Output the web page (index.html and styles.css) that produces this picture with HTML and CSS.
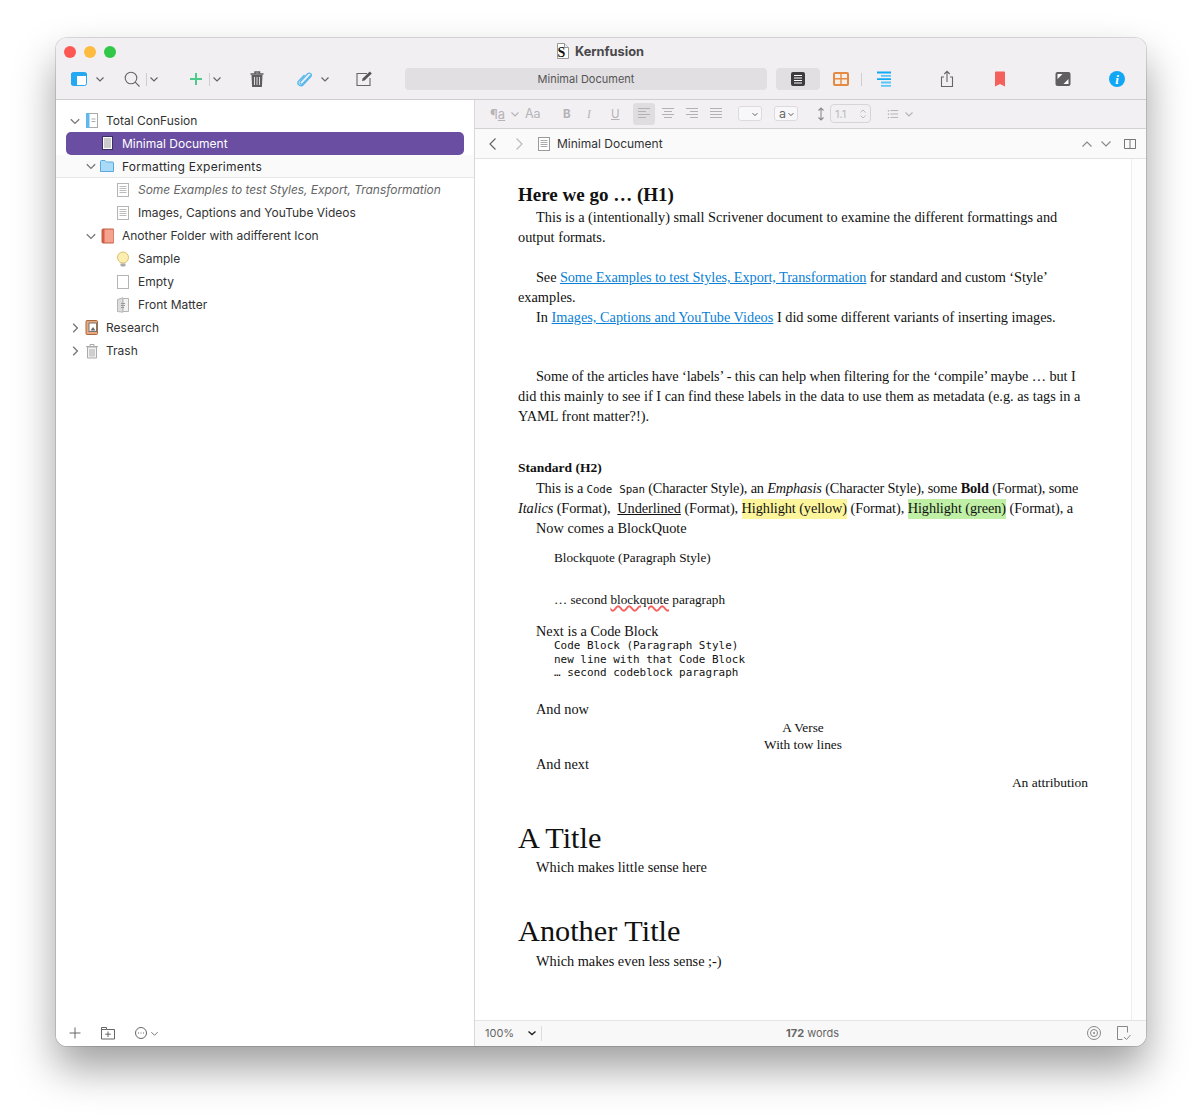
FILE: index.html
```html
<!DOCTYPE html>
<html lang="en">
<head>
<meta charset="utf-8">
<title>Kernfusion</title>
<link rel="stylesheet" href="styles.css">
</head>
<body>
<div class="window">
  <header class="chrome">
    <div class="titlebar">
      <div class="lights"><i class="light red"></i><i class="light yellow"></i><i class="light green"></i></div>
      <div class="title">
        <svg class="title-icon" viewBox="0 0 14 16"><path d="M1.500.5h7l4 4v11h-11z" fill="#fff" stroke="#999"/><path d="M8.500.5v4h4" fill="#eee" stroke="#999"/><text x="1.600" y="14" class="title-s">S</text></svg>
        <span>Kernfusion</span>
      </div>
    </div>
    <div class="toolbar">
      <svg class="ti ml-13" viewBox="0 0 20 20"><rect x="2.500" y="3.500" width="15" height="13" rx="2" fill="#fff" stroke="#2ba6ef"/><path d="M2 5.500a2 2 0 0 1 2-2h12a2 2 0 0 1 2 2v1.500H8v9.500H4a2 2 0 0 1-2-2z" fill="#23a8f2"/></svg>
      <svg class="cv ml-6" viewBox="0 0 10 10"><path d="M1.500 3.500 5 7l3.500-3.500"/></svg>
      <svg class="ti ml-17" viewBox="0 0 20 20"><circle cx="9" cy="9" r="5.800" class="ln-gray"/><path d="m13.200 13.200 4.300 4.300" class="ln-gray"/></svg>
      <i class="sep ml-4"></i>
      <svg class="cv ml-2" viewBox="0 0 10 10"><path d="M1.500 3.500 5 7l3.500-3.500"/></svg>
      <svg class="ti ml-27" viewBox="0 0 20 20"><path d="M10 4v12M4 10h12" fill="none" stroke="#4dcb8c" stroke-width="2"/></svg>
      <i class="sep ml-3"></i>
      <svg class="cv ml-2" viewBox="0 0 10 10"><path d="M1.500 3.500 5 7l3.500-3.500"/></svg>
      <svg class="ti ml-25" viewBox="0 0 20 20"><path d="M3.500 5h13M8 5V3h4.500v2" fill="none" stroke="#5f5d5f" stroke-width="1.500"/><path d="M4.500 6h11l-.6 12H5.100z" fill="#5f5d5f"/><path d="M7.500 8v8M10 8v8M12.500 8v8" stroke="#ddd"/></svg>
      <svg class="ti ml-28" viewBox="0 0 20 20"><path d="M15.500 6.500 8 14.500c-1.500 1.600-4 .2-2.600-2l7-7.500c2-2 5-.2 3.600 2.300l-7.500 8.200c-2.500 2.700-7 .5-5.200-3.200L9.500 6" fill="none" stroke="#57b9ee" stroke-width="1.300"/></svg>
      <svg class="cv ml-5" viewBox="0 0 10 10"><path d="M1.500 3.500 5 7l3.500-3.500"/></svg>
      <svg class="ti ml-24" viewBox="0 0 20 20"><path d="M13 4.500H3v12h13V9" class="ln-gray"/><path d="m8 12 .6-2.600L15.800 2.500l2 2-7.200 7z" fill="#555"/></svg>
      <div class="searchbar ml-31">Minimal Document</div>
      <div class="seg ml-9"><svg class="ti" viewBox="0 0 20 20"><rect x="3" y="3" width="14" height="14" rx="2" fill="#3d3b3d"/><path d="M6 6.500h8M6 9h8M6 11.500h8M6 14h8" stroke="#fff"/></svg></div>
      <svg class="ti ml-11" viewBox="0 0 20 20"><rect x="2" y="3" width="16" height="14" rx="2" fill="#e48a45"/><path d="M4 5h5.300v4H4zM10.700 5H16v4h-5.300zM4 10.500h5.300V15H4zM10.700 10.500H16V15h-5.300z" fill="#f6eee8"/></svg>
      <i class="sep ml-10"></i>
      <svg class="ti ml-12" viewBox="0 0 20 20"><path d="M3 3.500h14" stroke="#12aaf5" stroke-width="1.800"/><path d="M7 6.800h10" stroke="#58c6f8" stroke-width="1.800"/><path d="M3 10.200h14" stroke="#12aaf5" stroke-width="1.800"/><path d="M7 13.500h10M7 16.800h10" stroke="#58c6f8" stroke-width="1.800"/></svg>
      <svg class="ti ml-43" viewBox="0 0 20 20"><path d="M7 8H4.500v9.500h11V8H13M10 13V2.500M7.300 5 10 2.300 12.700 5" fill="none" stroke="#666" stroke-width="1.100"/></svg>
      <svg class="ti ml-33" viewBox="0 0 20 20"><path d="M5 3.500a1 1 0 0 1 1-1h8a1 1 0 0 1 1 1V17.500l-5-2.500-5 2.500z" fill="#f4615c"/></svg>
      <svg class="ti ml-43" viewBox="0 0 20 20"><rect x="2.500" y="3" width="15" height="14" rx="2" fill="#605e60"/><path d="M4.500 5h5l-5 5zM15.500 15h-5l5-5z" fill="#fff"/></svg>
      <svg class="ti ml-34" viewBox="0 0 20 20"><circle cx="10" cy="10" r="8" fill="#12a7f4"/><text x="10" y="14.500" class="info-i">i</text></svg>
    </div>
  </header>
  <div class="panes">
    <aside class="sidebar">
      <div class="tree">
        <div class="row l0">
          <svg class="chev" viewBox="0 0 10 10"><path d="M1.500 3.500 5 7l3.500-3.500"/></svg>
          <svg class="ic" viewBox="0 0 14 16"><rect x="2.500" y=".5" width="11" height="14" fill="#fff" stroke="#aaa"/><rect x="2" y="0" width="3.500" height="15" fill="#62b7ee"/><path d="M7.500 6h4M7.500 8.500h4" stroke="#aaa"/></svg>
          <span>Total ConFusion</span>
        </div>
        <div class="row l1 selected">
          <span class="chev"></span>
          <svg class="ic" viewBox="0 0 14 16"><rect x="2.500" y=".5" width="10" height="13" fill="#fff" stroke="#3c2e66"/><path d="M4 3h7M4 5h7M4 7h7M4 9h7M4 11h7" stroke="#999"/></svg>
          <span>Minimal Document</span>
        </div>
        <div class="row l1 band">
          <svg class="chev" viewBox="0 0 10 10"><path d="M1.500 3.500 5 7l3.500-3.500"/></svg>
          <svg class="ic" viewBox="0 0 14 16"><path d="M.5 13.500V3.500a1 1 0 0 1 1-1h3.500l1.500 1.500h6a1 1 0 0 1 1 1v8.500z" fill="#a9dbf8" stroke="#5aa9dc"/></svg>
          <span>Formatting Experiments</span>
        </div>
        <div class="row l2 ital">
          <span class="chev"></span>
          <svg class="ic" viewBox="0 0 14 16"><rect x="1.500" y="1.500" width="11" height="13" fill="#fff" stroke="#b5b5b5"/><path d="M3.500 4.500h7M3.500 6.500h7M3.500 8.500h7M3.500 10.500h7" stroke="#bbb"/></svg>
          <span>Some Examples to test Styles, Export, Transformation</span>
        </div>
        <div class="row l2">
          <span class="chev"></span>
          <svg class="ic" viewBox="0 0 14 16"><rect x="1.500" y="1.500" width="11" height="13" fill="#fff" stroke="#b5b5b5"/><path d="M3.500 4.500h7M3.500 6.500h7M3.500 8.500h7M3.500 10.500h7" stroke="#bbb"/></svg>
          <span>Images, Captions and YouTube Videos</span>
        </div>
        <div class="row l1">
          <svg class="chev" viewBox="0 0 10 10"><path d="M1.500 3.500 5 7l3.500-3.500"/></svg>
          <svg class="ic" viewBox="0 0 14 16"><rect x="2" y="1" width="12" height="14" rx="1" fill="#f5a28f" stroke="#c15d47"/><rect x="2" y="1" width="2.500" height="14" fill="#d05f45"/></svg>
          <span>Another Folder with adifferent Icon</span>
        </div>
        <div class="row l2">
          <span class="chev"></span>
          <svg class="ic" viewBox="0 0 14 16"><circle cx="7" cy="6.500" r="5.500" fill="#fcedb0" stroke="#d9c067"/><path d="M4.500 12.500h5v2l-1 1h-3l-1-1z" fill="#aaa"/></svg>
          <span>Sample</span>
        </div>
        <div class="row l2">
          <span class="chev"></span>
          <svg class="ic" viewBox="0 0 14 16"><rect x="1.500" y="1.500" width="11" height="13" fill="#fff" stroke="#b5b5b5"/></svg>
          <span>Empty</span>
        </div>
        <div class="row l2">
          <span class="chev"></span>
          <svg class="ic" viewBox="0 0 14 16"><path d="M1.500 2.500 7 .8v14.400l-5.500-.7z" fill="#ddd" stroke="#b5b5b5"/><path d="M7 1.500h5.500v13H7z" fill="#f2f2f2" stroke="#b5b5b5"/><path d="M5 6.500h4M5 8.500h4M5 10.500h3" stroke="#999"/></svg>
          <span>Front Matter</span>
        </div>
        <div class="row l0">
          <svg class="chev" viewBox="0 0 10 10"><path d="M3.500 1.500 7 5l-3.500 3.500"/></svg>
          <svg class="ic" viewBox="0 0 14 16"><rect x="2" y=".5" width="11.500" height="14" rx="1" fill="#eba77c" stroke="#a86a42"/><rect x="5" y="3" width="7.500" height="8.500" fill="#fff" stroke="#777"/><path d="m6.500 10.500 2.500-3.500 2.500 3.500z" fill="#666"/></svg>
          <span>Research</span>
        </div>
        <div class="row l0">
          <svg class="chev" viewBox="0 0 10 10"><path d="M3.500 1.500 7 5l-3.500 3.500"/></svg>
          <svg class="ic" viewBox="0 0 14 16"><path d="M2 3.500h12M6 3.500v-2h4v2" fill="none" stroke="#aaa"/><path d="M3.500 4h9v11h-9z" fill="#f2f2f2" stroke="#aaa"/><path d="M6 6v7.500M8 6v7.500M10 6v7.500" stroke="#aaa"/></svg>
          <span>Trash</span>
        </div>
      </div>
      <div class="side-foot">
        <svg class="fi" viewBox="0 0 16 16"><path d="M8 2.500v11M2.500 8h11" class="ln-thin"/></svg>
        <svg class="fi ml-17" viewBox="0 0 16 16"><path d="M1.500 14V2.500h5v2h8V14zM1.500 4.500h5M8 6.500v5.500M5.200 9.200h5.600" class="ln-thin"/></svg>
        <svg class="fi ml-17" viewBox="0 0 16 16"><circle cx="8" cy="8" r="5.500" class="ln-thin"/><path d="M5 8h1M7.500 8h1M10 8h1" stroke="#666"/></svg>
        <svg class="cv-small ml-1" viewBox="0 0 10 10"><path d="M1.500 3.500 5 7l3.500-3.500"/></svg>
      </div>
    </aside>
    <main class="editor">
      <div class="formatbar">
        <span class="fb-para">¶<u>a</u></span>
        <svg class="cv-fb ml-3" viewBox="0 0 10 10"><path d="M1.500 3.500 5 7l3.500-3.500"/></svg>
        <span class="fb-aa ml-5">Aa</span>
        <b class="fb-b">B</b>
        <i class="fb-i">I</i>
        <u class="fb-u">U</u>
        <svg class="al al-active" viewBox="0 0 22 22"><path d="M5 5.500h12M5 8.500h8M5 11.500h12M5 14.500h8"/></svg>
        <svg class="al ml-2" viewBox="0 0 22 22"><path d="M5 5.500h12M7 8.500h8M5 11.500h12M7 14.500h8"/></svg>
        <svg class="al ml-2" viewBox="0 0 22 22"><path d="M5 5.500h12M9 8.500h8M5 11.500h12M9 14.500h8"/></svg>
        <svg class="al ml-2" viewBox="0 0 22 22"><path d="M5 5.500h12M5 8.500h12M5 11.500h12M5 14.500h12"/></svg>
        <span class="fb-sel fb-sel-empty"><svg class="cv-mini" viewBox="0 0 10 10"><path d="M2 4 5 7l3-3"/></svg></span>
        <span class="fb-sel fb-sel-a">a<svg class="cv-mini" viewBox="0 0 10 10"><path d="M2 4 5 7l3-3"/></svg></span>
        <svg class="fb-arrows" viewBox="0 0 10 16"><path d="M5 2v12M2.500 4.500 5 2l2.500 2.500M2.500 11.500 5 14l2.500-2.500" fill="none" stroke="#8a8a8a" stroke-width="1.100"/></svg>
        <span class="fb-step">1.1<svg class="updown" viewBox="0 0 8 12"><path d="M1.500 4.500 4 2l2.500 2.500M1.500 7.500 4 10l2.500-2.500" fill="none" stroke="#bbb"/></svg></span>
        <svg class="fb-list" viewBox="0 0 14 12"><path d="M4 2h9M4 6h9M4 10h9" stroke="#aaa"/><path d="M1 1.500h1.500v1.500H1zM1 5.500h1.500V7H1zM1 9.500h1.500V11H1z" fill="#aaa"/></svg>
        <svg class="cv-fb ml-5" viewBox="0 0 10 10"><path d="M1.500 3.500 5 7l3.500-3.500"/></svg>
      </div>
      <div class="navbar">
        <svg class="nav-arrow" viewBox="0 0 10 14"><path d="M7.500 1.500 2 7l5.500 5.500" fill="none" stroke="#666" stroke-width="1.200"/></svg>
        <svg class="nav-arrow ml-16" viewBox="0 0 10 14"><path d="M2.500 1.500 8 7l-5.500 5.500" fill="none" stroke="#bbb" stroke-width="1.200"/></svg>
        <svg class="nav-doc" viewBox="0 0 14 16"><rect x="1.500" y="1.500" width="11" height="13" fill="#fff" stroke="#999"/><path d="M3.500 4.500h7M3.500 6.500h7M3.500 8.500h7M3.500 10.500h7" stroke="#aaa"/></svg>
        <span class="nav-title">Minimal Document</span>
        <svg class="nav-up" viewBox="0 0 12 8"><path d="M1.500 6.500 6 2l4.500 4.500" fill="none" stroke="#888" stroke-width="1.100"/></svg>
        <svg class="nav-up ml-7" viewBox="0 0 12 8"><path d="M1.500 1.500 6 6l4.500-4.500" fill="none" stroke="#888" stroke-width="1.100"/></svg>
        <svg class="nav-split" viewBox="0 0 12 12"><path d="M.5 1.500h11v9H.5zM6 1.500v9M.5 1.500h11" fill="none" stroke="#777"/></svg>
      </div>
      <div class="docarea">
        <article class="doc">
          <h1 class="h1">Here we go … (H1)</h1>
          <p class="p gap-2"><span class="ind"></span>This is a (intentionally) small Scrivener document to examine the different formattings and<br>output formats.</p>
          <p class="p gap-20"><span class="ind"></span><span class="tight-1">See <a class="lnk">Some Examples to test Styles, Export, Transformation</a> for standard and custom ‘Style’</span><br>examples.<br><span class="ind"></span>In <a class="lnk">Images, Captions and YouTube Videos</a> I did some different variants of inserting images.</p>
          <p class="p gap-39"><span class="ind"></span><span class="tight-1">Some of the articles have ‘labels’ - this can help when filtering for the ‘compile’ maybe … but I</span><br>did this mainly to see if I can find these labels in the data to use them as metadata (e.g. as tags in a<br>YAML front matter?!).</p>
          <h2 class="h2 gap-32">Standard (H2)</h2>
          <p class="p"><span class="ind"></span><span class="tight-2">This is a <code class="cs">Code Span</code> (Character Style), an <em>Emphasis</em> (Character Style), some <b>Bold</b> (Format), some</span><br><span class="tight-1"><em>Italics</em> (Format),&nbsp; <u>Underlined</u> (Format), <mark class="hl-y">Highlight (yellow)</mark> (Format), <mark class="hl-g">Highlight (green)</mark> (Format), a</span><br><span class="ind"></span>Now comes a BlockQuote</p>
          <p class="p quote gap-10">Blockquote (Paragraph Style)</p>
          <p class="p quote gap-22">… second <span class="spell">blockquote</span> paragraph</p>
          <p class="p gap-11"><span class="ind"></span>Next is a Code Block</p>
          <pre class="code">Code Block (Paragraph Style)
new line with that Code Block
… second codeblock paragraph</pre>
          <p class="p gap-19"><span class="ind"></span>And now</p>
          <p class="verse">A Verse<br>With tow lines</p>
          <p class="p"><span class="ind"></span>And next</p>
          <p class="p attr">An attribution</p>
          <h1 class="title-h gap-26">A Title</h1>
          <p class="p"><span class="ind"></span>Which makes little sense here</p>
          <h1 class="title-h gap-35 title-last">Another Title</h1>
          <p class="p"><span class="ind"></span>Which makes even less sense ;-)</p>
        </article>
        <div class="scrolltrack"></div>
      </div>
      <footer class="statusbar">
        <span class="zoom">100%</span>
        <svg class="zoom-cv" viewBox="0 0 10 10"><path d="M1.500 3.500 5 6.500l3.500-3" fill="none" stroke="#222" stroke-width="1.400"/></svg>
        <i class="sep-status"></i>
        <span class="words"><b>172</b> words</span>
        <svg class="st-ic" viewBox="0 0 16 16"><circle cx="8" cy="8" r="6.500" fill="none" stroke="#888"/><circle cx="8" cy="8" r="3.500" fill="none" stroke="#888"/><circle cx="8" cy="8" r="1" fill="#888"/></svg>
        <svg class="st-ic ml-14" viewBox="0 0 16 16"><path d="M11.500 1.500h-10v13h5M11.500 1.500v6" fill="none" stroke="#888"/><path d="m8 12 2.500 2.500 4-4.500" fill="none" stroke="#888"/></svg>
      </footer>
    </main>
  </div>
</div>
</body>
</html>
```
FILE: styles.css
```css
* { box-sizing: border-box; }
html, body { margin: 0; padding: 0; }
body { background: #fff; padding: 38px 56px 0; height: 1120px; overflow: hidden; font-family: Inter, "Liberation Sans", sans-serif; }
.window { width: 1090px; height: 1008px; border-radius: 11px; overflow: hidden; background: #fff; box-shadow: 0 0 0 1px rgba(0,0,0,.13), 0 22px 42px rgba(0,0,0,.38); display: flex; flex-direction: column; }
.ml-1 { margin-left: 1px; } .ml-2 { margin-left: 2px; } .ml-3 { margin-left: 3px; } .ml-4 { margin-left: 4px; } .ml-5 { margin-left: 5px; } .ml-6 { margin-left: 6px; } .ml-7 { margin-left: 7px; } .ml-9 { margin-left: 9px; } .ml-10 { margin-left: 10px; } .ml-11 { margin-left: 11px; } .ml-12 { margin-left: 12px; } .ml-13 { margin-left: 13px; } .ml-14 { margin-left: 14px; } .ml-16 { margin-left: 16px; } .ml-17 { margin-left: 17px; } .ml-24 { margin-left: 24px; } .ml-25 { margin-left: 25px; } .ml-27 { margin-left: 27px; } .ml-28 { margin-left: 28px; } .ml-31 { margin-left: 31px; } .ml-33 { margin-left: 33px; } .ml-34 { margin-left: 34px; } .ml-43 { margin-left: 43px; }

.chrome { height: 62px; flex: none; background: #f1eff2; border-bottom: 1px solid #cfcdd0; }
.titlebar { height: 28px; position: relative; display: flex; align-items: center; justify-content: center; }
.lights { position: absolute; left: 8px; top: 8px; display: flex; gap: 8px; }
.light { width: 12px; height: 12px; border-radius: 50%; display: block; }
.red { background: #fc5753; } .yellow { background: #fdbc40; } .green { background: #33c748; }
.title { display: flex; align-items: center; gap: 5px; font-size: 12.800px; font-weight: 700; color: #4a484a; padding-bottom: 2px; margin-left: -2px; }
.title-icon { width: 14px; height: 16px; }
.title-s { font: 700 14px "Liberation Serif", serif; fill: #111; }
.toolbar { height: 26px; display: flex; align-items: center; }
.ti { width: 20px; height: 20px; flex: none; }
.ln-gray { fill: none; stroke: #666; stroke-width: 1.100; }
.cv { width: 10px; height: 10px; flex: none; fill: none; stroke: #666; stroke-width: 1.200; }
.sep { width: 1px; height: 13px; background: #cfcdd0; flex: none; display: block; }
.searchbar { width: 362px; height: 22px; border-radius: 4px; background: #e1dfe2; color: #555; font-size: 11px; line-height: 22px; text-align: center; flex: none; }
.seg { width: 44px; height: 22px; border-radius: 4px; background: #e1dfe2; display: flex; align-items: center; justify-content: center; flex: none; }

.panes { flex: 1; min-height: 0; display: flex; }
.sidebar { width: 419px; flex: none; border-right: 1px solid #d8d8d8; display: flex; flex-direction: column; background: #fff; }
.tree { flex: 1; padding-top: 9px; position: relative; }
.row { height: 23px; display: flex; align-items: center; font-size: 12px; color: #333; white-space: nowrap; }
.l0 { padding-left: 13px; } .l1 { padding-left: 29px; } .l2 { padding-left: 45px; }
.chev { width: 12px; height: 12px; flex: none; fill: none; stroke: #777; stroke-width: 1.100; display: block; }
.ic { width: 14px; height: 16px; flex: none; margin: 0 8px 0 3px; }
.selected { margin: 0 10px; padding-left: 19px; background: #694ea1; color: #fff; border-radius: 5px; }
.band { background: #fafafa; border-bottom: 1px solid #e8e8e8; letter-spacing: .25px; color: #2a2a2a; }
.ital span:last-child { font-style: italic; color: #666; letter-spacing: -.05px; }
.side-foot { height: 26px; flex: none; display: flex; align-items: center; padding-left: 11px; }
.fi { width: 16px; height: 16px; flex: none; }
.ln-thin { fill: none; stroke: #666; stroke-width: 1; }
.cv-small { width: 9px; height: 9px; flex: none; fill: none; stroke: #777; stroke-width: 1.100; }

.editor { flex: 1; min-width: 0; display: flex; flex-direction: column; }
.formatbar { height: 29px; flex: none; background: #f2f0f3; border-bottom: 1px solid #d3d1d4; display: flex; align-items: center; padding: 0 0 1px 15px; color: #b5b3b6; font-size: 13px; }
.fb-para { width: 17px; font-size: 13px; white-space: nowrap; }
.cv-fb { width: 10px; height: 10px; flex: none; fill: none; stroke: #b5b3b6; stroke-width: 1.200; }
.fb-aa { font-size: 12.500px; width: 16px; white-space: nowrap; }
.fb-b { width: 8px; margin-left: 22px; font-size: 11.500px; }
.fb-i { width: 6px; margin-left: 16px; font-size: 11.500px; font-family: "Liberation Serif", serif; }
.fb-u { width: 8px; margin-left: 18px; font-size: 11.500px; }
.al { width: 22px; height: 22px; flex: none; fill: none; stroke: #b3b1b4; stroke-width: 1; }
.al-active { margin-left: 14px; background: #dfdde0; border-radius: 3px; }
.fb-sel { height: 15px; display: flex; align-items: center; justify-content: flex-end; background: #f8f7f9; border: 1px solid #dcdadd; border-radius: 3px; color: #666; font-size: 12.500px; padding-right: 2px; flex: none; }
.fb-sel-empty { width: 24px; margin-left: 11px; }
.fb-sel-a { width: 24px; margin-left: 12px; justify-content: space-between; padding-left: 4px; }
.cv-mini { width: 8px; height: 8px; fill: none; stroke: #555; stroke-width: 1.200; }
.fb-arrows { width: 10px; height: 16px; flex: none; margin-left: 18px; }
.fb-step { width: 41px; height: 19px; margin-left: 4px; border: 1px solid #d6d4d7; border-radius: 4px; font-size: 11px; color: #bbb; display: flex; align-items: center; justify-content: space-between; padding: 0 3px 0 4px; flex: none; }
.updown { width: 8px; height: 12px; }
.fb-list { width: 12px; height: 12px; flex: none; margin-left: 16px; }
.navbar { height: 30px; flex: none; background: #fbfafb; border-bottom: 1px solid #e2e2e2; display: flex; align-items: center; padding-left: 13px; }
.nav-arrow { width: 10px; height: 14px; flex: none; }
.nav-doc { width: 14px; height: 16px; flex: none; margin-left: 13px; }
.nav-title { font-size: 12px; color: #333; margin-left: 6px; flex: 1; }
.nav-up { width: 12px; height: 8px; flex: none; }
.nav-split { width: 12px; height: 12px; flex: none; margin: 0 10px 0 12px; }

.docarea { flex: 1; min-height: 0; display: flex; background: #fff; }
.doc { flex: 1; padding: 26px 0 0 43px; min-width: 0; font-family: "Liberation Serif", serif; color: #111; white-space: nowrap; }
.scrolltrack { width: 15px; flex: none; background: #fdfdfd; border-left: 1px solid #eee; }
.h1 { margin: 0; font-size: 19px; line-height: 20px; font-weight: 700; }
.p { margin: 0; font-size: 14.320px; line-height: 20px; width: 570px; }
.ind { display: inline-block; width: 18px; }
.tight-1 { letter-spacing: -.085px; }
.tight-2 { letter-spacing: -.15px; }
.gap-2 { margin-top: 2px; } .gap-10 { margin-top: 10px; } .gap-11 { margin-top: 11px; } .gap-19 { margin-top: 19px; } .gap-20 { margin-top: 20px; } .gap-22 { margin-top: 22px; } .gap-26 { margin-top: 26px; } .gap-32 { margin-top: 32px; } .gap-35 { margin-top: 35px; } .gap-39 { margin-top: 39px; }
.h2 { margin-bottom: 0; margin-left: 0; margin-right: 0; font-size: 13.500px; line-height: 20px; font-weight: 700; }
.lnk { color: #0a7fd6; text-decoration: underline; }
.cs { font-family: "DejaVu Sans Mono", monospace; font-size: 10.800px; word-spacing: 1px; line-height: 1; }
mark { color: inherit; padding: 1px 0 3px; }
.hl-y { background: #fdf59b; } .hl-g { background: #bff0a6; }
.quote { padding-left: 36px; font-size: 13.200px; }
.spell { text-decoration: underline wavy #f4605e; text-decoration-thickness: 1.500px; }
.code { margin: -2px 0 0 36px; font-family: "DejaVu Sans Mono", monospace; font-size: 10.950px; line-height: 13.500px; }
.verse { margin: 0 0 1px; width: 570px; text-align: center; font-size: 13.300px; line-height: 17px; }
.attr { text-align: right; margin-top: -1px; font-size: 13.500px; }
.title-h { margin-bottom: 0; margin-left: 0; margin-right: 0; font-size: 30.300px; line-height: 38px; font-weight: 400; }
.title-last { margin-bottom: 1px; }

.statusbar { height: 26px; flex: none; background: #f8f8f8; border-top: 1px solid #e4e4e4; display: flex; align-items: center; font-size: 11px; color: #666; padding: 0 14px 1px 10px; }
.zoom { width: 42px; }
.zoom-cv { width: 10px; height: 10px; flex: none; }
.sep-status { width: 1px; height: 15px; background: #ddd; margin-left: 4px; display: block; flex: none; }
.words { flex: 1; margin-left: 244px; }
.st-ic { width: 16px; height: 16px; flex: none; }
.info-i { font: italic 700 13px "Liberation Serif", serif; fill: #fff; text-anchor: middle; }
```
